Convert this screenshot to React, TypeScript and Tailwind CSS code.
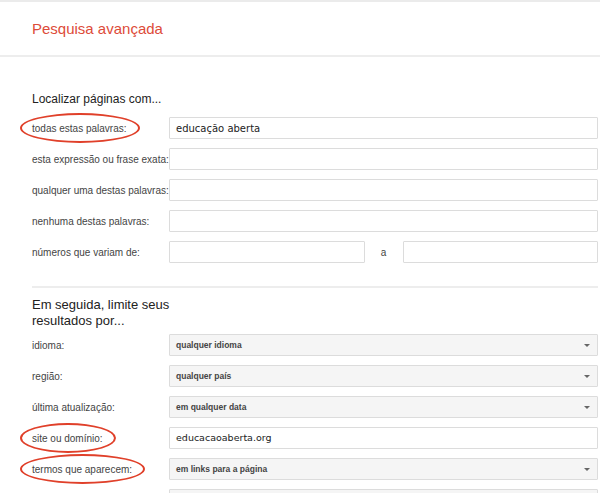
import React from "react";

const Label = ({ text, ring }: { text: string; ring?: boolean }) => (
  <div className="flex w-[137px] shrink-0 items-center">
    <span className="relative whitespace-nowrap text-[10px] text-[#444]">
      {text}
      {ring ? (
        <span className="pointer-events-none absolute -left-[12px] -right-[13px] top-1/2 h-[30px] -translate-y-1/2 rounded-[50%] border-2 border-[#e0402a]" />
      ) : null}
    </span>
  </div>
);

const TextBox = ({ value, small }: { value?: string; small?: boolean }) => (
  <div
    className={`flex h-[22px] flex-1 items-center rounded-[1px] border border-[#dcdcdc] bg-white px-[6px] text-[#222] ${
      small ? "text-[9.5px]" : "text-[10px]"
    }`}
    style={{ fontFamily: '"DejaVu Sans", sans-serif' }}
  >
    {value}
  </div>
);

const Select = ({ value }: { value: string }) => (
  <div className="flex h-[22px] flex-1 items-center justify-between rounded-[1px] border border-[#dcdcdc] bg-[#f5f5f5] pl-[6px] pr-[7px]">
    <span className="text-[8.5px] font-bold text-[#444]">{value}</span>
    <span className="h-0 w-0 border-x-[3px] border-t-[3px] border-x-transparent border-t-[#666]" />
  </div>
);

export default function App() {
  return (
    <div
      className="h-[493px] w-[600px] overflow-hidden border-t-2 border-[#ebebeb] bg-white"
      style={{ fontFamily: '"Liberation Sans", Arial, sans-serif' }}
    >
      <div className="flex h-[55px] items-center border-b-2 border-[#ededed] pl-8 pt-[2px]">
        <h1 className="text-[15px] text-[#dd4b39]">Pesquisa avançada</h1>
      </div>

      <div className="pl-8 pr-[2px]">
        <h2 className="pt-[33px] text-[12px] text-[#222]">Localizar páginas com...</h2>

        <div className="mt-[9px] flex flex-col gap-[9px]">
          <div className="flex">
            <Label text="todas estas palavras:" ring />
            <TextBox value="educação aberta" />
          </div>
          <div className="flex">
            <Label text="esta expressão ou frase exata:" />
            <TextBox />
          </div>
          <div className="flex">
            <Label text="qualquer uma destas palavras:" />
            <TextBox />
          </div>
          <div className="flex">
            <Label text="nenhuma destas palavras:" />
            <TextBox />
          </div>
          <div className="flex">
            <Label text="números que variam de:" />
            <div className="flex flex-1 items-center">
              <TextBox />
              <span className="w-[38px] text-center text-[10px] text-[#444]">a</span>
              <TextBox />
            </div>
          </div>
        </div>

        <div className="mt-[23px] border-t-2 border-[#ededed]" />

        <h2 className="w-[142px] pt-[9px] text-[13px] leading-[16px] text-[#222]">
          Em seguida, limite seus resultados por...
        </h2>

        <div className="mt-[5px] flex flex-col gap-[9px]">
          <div className="flex">
            <Label text="idioma:" />
            <Select value="qualquer idioma" />
          </div>
          <div className="flex">
            <Label text="região:" />
            <Select value="qualquer país" />
          </div>
          <div className="flex">
            <Label text="última atualização:" />
            <Select value="em qualquer data" />
          </div>
          <div className="flex">
            <Label text="site ou domínio:" ring />
            <TextBox value="educacaoaberta.org" small />
          </div>
          <div className="flex">
            <Label text="termos que aparecem:" ring />
            <Select value="em links para a página" />
          </div>
          <div className="flex">
            <Label text="" />
            <Select value="" />
          </div>
        </div>
      </div>
    </div>
  );
}
